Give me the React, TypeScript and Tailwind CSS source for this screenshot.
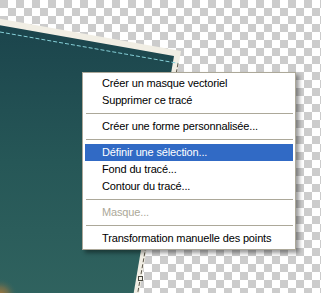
import React from "react";

type Item = { label: string; kind?: "sep" | "active" | "disabled" };

const items: Item[] = [
  { label: "Créer un masque vectoriel" },
  { label: "Supprimer ce tracé" },
  { label: "", kind: "sep" },
  { label: "Créer une forme personnalisée..." },
  { label: "", kind: "sep" },
  { label: "Définir une sélection...", kind: "active" },
  { label: "Fond du tracé..." },
  { label: "Contour du tracé..." },
  { label: "", kind: "sep" },
  { label: "Masque...", kind: "disabled" },
  { label: "", kind: "sep" },
  { label: "Transformation manuelle des points" },
];

function Canvas() {
  return (
    <svg width="321" height="293" viewBox="0 0 321 293" className="block">
      <defs>
        <pattern id="checker" width="16" height="16" patternUnits="userSpaceOnUse">
          <rect width="16" height="16" fill="#ffffff" />
          <rect width="8" height="8" fill="#cccccc" />
          <rect x="8" y="8" width="8" height="8" fill="#cccccc" />
        </pattern>
        <linearGradient id="teal" x1="0" y1="0" x2="0" y2="1">
          <stop offset="0" stopColor="#1b444c" />
          <stop offset="0.5" stopColor="#265757" />
          <stop offset="1" stopColor="#30635f" />
        </linearGradient>
        <radialGradient id="glow" cx="0" cy="296" r="18" gradientUnits="userSpaceOnUse">
          <stop offset="0" stopColor="#b37a38" />
          <stop offset="0.5" stopColor="#8a7446" stopOpacity="0.6" />
          <stop offset="1" stopColor="#30635f" stopOpacity="0" />
        </radialGradient>
      </defs>
      <rect width="321" height="293" fill="url(#checker)" />
      {/* photo frame */}
      <polygon points="-10,17 181,51 138,300 -10,300" fill="#f1eee4" />
      <polygon points="-10,23.5 174,56 132.5,300 -10,300" fill="url(#teal)" />
      <rect x="0" y="260" width="40" height="33" fill="url(#glow)" />
      {/* path outline */}
      <line x1="0" y1="32" x2="178" y2="63.3" stroke="#86d0d8" strokeWidth="1" strokeDasharray="4 2" />
      <line x1="178" y1="63.3" x2="136.5" y2="300" stroke="#5a5548" strokeWidth="1" strokeDasharray="4 2" />
      <rect x="138.5" y="276.5" width="4" height="4" fill="#f1eee4" stroke="#4a4a40" strokeWidth="1" />
    </svg>
  );
}

export default function App() {
  return (
    <div className="relative h-[293px] w-[321px] overflow-hidden bg-white">
      <Canvas />
      <div
        className="absolute left-[82px] top-[72px] w-[214px] border border-[#aca899] bg-white p-[2px] shadow-[3px_3px_4px_rgba(0,0,0,0.4)]"
        style={{ fontFamily: '"Liberation Sans", Arial, sans-serif' }}
      >
        {items.map((item, i) =>
          item.kind === "sep" ? (
            <div key={i} className="py-[4px] pl-[1px]">
              <div className="h-px bg-[#aca899]" />
            </div>
          ) : (
            <div
              key={i}
              className={
                item.kind === "active"
                  ? "h-[17px] bg-[#316ac5] pl-[17px] text-[11px] leading-[17px] tracking-[-0.15px] text-white"
                  : item.kind === "disabled"
                    ? "h-[17px] pl-[17px] text-[11px] leading-[17px] tracking-[-0.15px] text-[#aca899]"
                    : "h-[17px] pl-[17px] text-[11px] leading-[17px] tracking-[-0.15px] text-black"
              }
            >
              {item.label}
            </div>
          ),
        )}
      </div>
    </div>
  );
}
